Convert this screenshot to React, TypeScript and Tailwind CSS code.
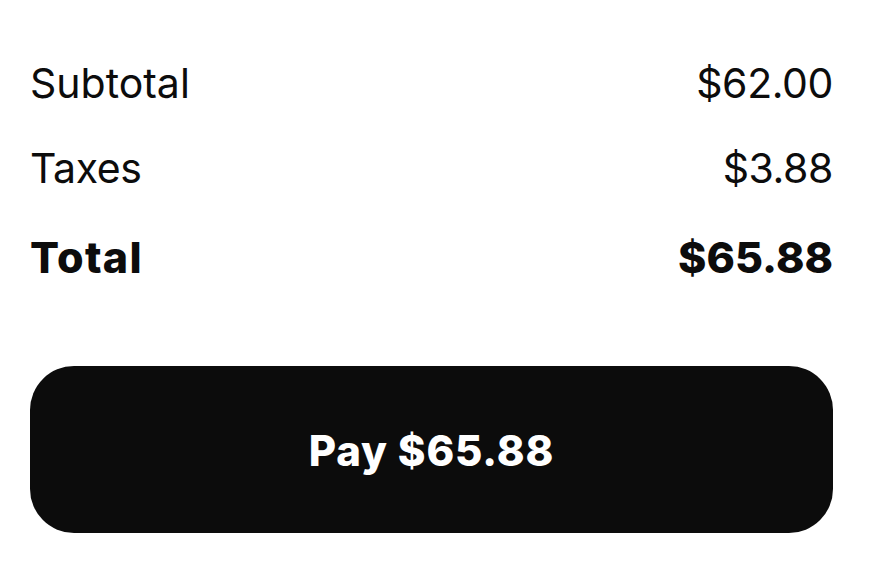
export default function App() {
  return (
    <main
      className="min-h-screen bg-white text-[#0c0c0c] pl-[30px] pt-[59px]"
      style={{ fontFamily: "Inter, 'Liberation Sans', sans-serif" }}
    >
      <div className="w-[803px]">
        <div className="flex items-center justify-between text-[41px] leading-[48px] tracking-[-0.01em]">
          <span className="tracking-normal">Subtotal</span>
          <span>$62.00</span>
        </div>
        <div className="mt-[37px] flex items-center justify-between text-[41px] leading-[48px] tracking-[-0.01em]">
          <span>Taxes</span>
          <span>$3.88</span>
        </div>
        <div className="mt-[41px] flex items-center justify-between text-[43px] leading-[48px] font-extrabold">
          <span className="tracking-[0.03em]">Total</span>
          <span>$65.88</span>
        </div>
        <button className="mt-[85px] flex h-[167px] w-full items-center justify-center rounded-[44px] bg-[#0c0c0c] pt-[2px] text-[42px] font-extrabold tracking-[0.02em] text-white">
          Pay $65.88
        </button>
      </div>
    </main>
  );
}
